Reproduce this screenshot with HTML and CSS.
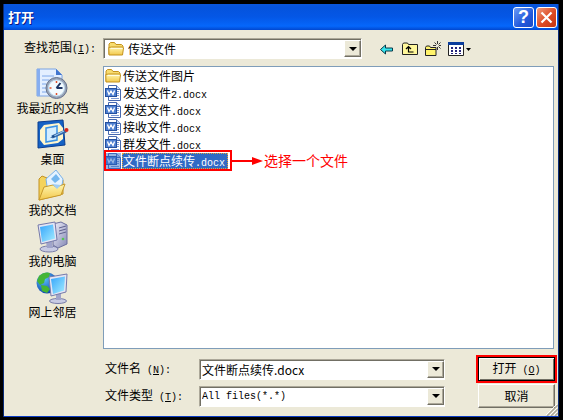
FILE: index.html
```html
<!doctype html>
<html lang="zh-CN">
<head>
  <meta charset="utf-8" />
  <meta name="viewport" content="width=device-width, initial-scale=1" />
  <title>打开</title>
  <link rel="stylesheet" href="styles.css">
</head>
<body>
  <!-- shared 16px icons -->
  <svg class="defs" width="0" height="0" aria-hidden="true">
    <defs>
      <linearGradient id="gold" x1="0" y1="0" x2="0" y2="1"><stop offset="0" stop-color="#fff6b0"/><stop offset="1" stop-color="#f2c84c"/></linearGradient>
      <linearGradient id="screen" x1="0" y1="0" x2="1" y2="1"><stop offset="0" stop-color="#35a5fb"/><stop offset="1" stop-color="#a5edff"/></linearGradient>
      <linearGradient id="case" x1="0" y1="0" x2="1" y2="1"><stop offset="0" stop-color="#f2f2fc"/><stop offset="1" stop-color="#8589b5"/></linearGradient>
      <radialGradient id="sea" cx=".35" cy=".3" r=".8"><stop offset="0" stop-color="#5cc4ff"/><stop offset="1" stop-color="#0739a4"/></radialGradient>
      <symbol id="folder" viewBox="0 0 16 16">
        <path d="M1 13.500V3l1.500-1.500h4L8 3.500h5.500L15 5v3" fill="#f7dc70" stroke="#c4921c"/>
        <path d="M1 14 .8 6.500 3.500 6h11l1 1-1 7z" fill="url(#gold)" stroke="#c4921c"/>
        <path d="M2.500 7.500h12" stroke="#fffce0"/>
      </symbol>
      <symbol id="word" viewBox="0 0 16 16">
        <path d="M3.500.5h8l4 4v11h-12z" fill="#fff" stroke="#486ab0"/>
        <path d="M11.500.5v4h4" fill="#c4d8f8" stroke="#486ab0"/>
        <path d="M12 6.500h2M12 8.500h2M12 10.500h2M6 13.500h8" stroke="#7e9bd5"/>
        <rect x=".5" y="3.500" width="11" height="8" fill="#4c7ed0" stroke="#24509e"/>
        <path d="M2.500 5.500 4 9.500 6 6 8 9.500 9.500 5.500" fill="none" stroke="#fff" stroke-width="1.300"/>
      </symbol>
    </defs>
  </svg>

  <main class="dialog" role="dialog" aria-labelledby="title">
    <header class="titlebar">
      <h1 id="title">打开</h1>
      <button class="caption help" type="button" aria-label="帮助">?</button>
      <button class="caption close" type="button" aria-label="关闭">
        <svg width="13" height="13" viewBox="0 0 13 13"><path d="M1.500 1.500l10 10M11.500 1.500l-10 10" stroke="#fff" stroke-width="2.200"/></svg>
      </button>
    </header>

    <form class="content">
      <label class="lookin-label" for="lookin">查找范围<span class="en">(<u>I</u>):</span></label>
      <div class="lookin">
        <div class="combo has-icon">
          <svg class="combo-icon" width="16" height="16"><use href="#folder"/></svg>
          <select id="lookin"><option>传送文件</option></select>
          <span class="drop"></span>
        </div>
        <div class="toolbar">
          <button type="button" aria-label="后退">
            <svg width="16" height="16" viewBox="0 0 16 16"><path d="M1.500 8.500l5-4.500v3h7v3h-7v3z" fill="#35e5ed" stroke="#083848"/></svg>
          </button>
          <button type="button" aria-label="向上一级">
            <svg width="16" height="16" viewBox="0 0 16 16"><path d="M.5 13.500v-10l1-1.500h4l1 1.500h9v10z" fill="#fff79a" stroke="#222"/><path d="M11.500 11H6.500V6.500M4 8l2.500-2.500L9 8" fill="none" stroke="#000" stroke-width="1.200"/></svg>
          </button>
          <button type="button" aria-label="新建文件夹">
            <svg width="16" height="16" viewBox="0 0 16 16"><path d="M.5 14.500v-8l1-1.500h3l1 1.500h5.500v8z" fill="#fff36a" stroke="#222"/><path d="M.5 8.500h10.500" stroke="#222"/><path d="M12.500 0v3M12.500 6v3M8 4.500h3M14 4.500h2M9.500 1.500l2 2M15.500 1.500l-2 2M13.500 5.500l2 2" stroke="#333"/></svg>
          </button>
          <button type="button" aria-label="查看" class="views">
            <svg width="24" height="16" viewBox="0 0 24 16"><path d="M.5 1.500h15v13H.5z" fill="#fff" stroke="#222"/><path d="M0 1h16v3H0z" fill="#0b3d9c"/><path d="M3 6h2v2H3zM7 6h2v2H7zM11 6h2v2h-2zM3 9h2v2H3zM7 9h2v2H7zM11 9h2v2h-2zM3 12h2v1H3zM7 12h2v1H7zM11 12h2v1h-2z" fill="#25257c"/><path d="M18 7h5l-2.500 3z" fill="#000"/></svg>
          </button>
        </div>
      </div>

      <nav class="places" aria-label="位置">
        <button type="button">
          <svg width="32" height="32" viewBox="0 0 32 32">
            <path d="M1 1h19l6 6v21H1z" fill="#e3efff" stroke="#7ba3e2"/><path d="M1 1h3v27H1z" fill="#86aef0"/><path d="M20 1v6h6" fill="#4276cf"/>
            <path d="M6 8h12M6 12h7M6 16h4M6 20h4M6 24h5" stroke="#7ea8ea"/>
            <circle cx="20.500" cy="20" r="10.500" fill="#98a3b8" stroke="#66748c"/><circle cx="20.500" cy="20" r="8" fill="#f3fbff" stroke="#bfdcef"/>
            <path d="M20.500 20l4-5M20.500 20h6" stroke="#1d3564" stroke-width="2"/><path d="M20.500 13v2M20.500 25v2M13.500 20h2" stroke="#e0512c" stroke-width="1.500"/>
          </svg>
          <span>我最近的文档</span>
        </button>
        <button type="button">
          <svg width="32" height="32" viewBox="0 0 32 32">
            <path d="M1 3 26 1l2 25-27 3z" fill="#1562c5" stroke="#0b3d8f"/><path d="M7 6l15-2 4 5v11l-5 4-14 2-4-5V11z" fill="#fff6cd"/>
            <path d="M9 9l11-2v14L9 23z" fill="#d5eeff" stroke="#3a93e6" stroke-width="1.500"/>
            <path d="M15 18l14-6" stroke="#3768a8" stroke-width="3"/><path d="M17 17l10-5" stroke="#a7d9ff"/><path d="M13 19l4-3 1 2z" fill="#164a8a"/><circle cx="29.500" cy="11" r="2" fill="#d8271c"/>
          </svg>
          <span>桌面</span>
        </button>
        <button type="button">
          <svg width="32" height="32" viewBox="0 0 32 32">
            <path d="M3 30V9l3-3 5 2 3 5 13-3v14z" fill="#f4d35c" stroke="#c29123"/>
            <path d="M10 9 20 0l7 9-2 13-13 1z" fill="#e5f3ff" stroke="#79b1e8"/><path d="M15 9l5-5 4 5-5 4z" fill="#74b7ef"/>
            <path d="M3 30 8 17l9-2 3 2 9-3-4 11z" fill="url(#gold)" stroke="#c89a2c"/><path d="M16 14l5 5 4-4" fill="#9fcdf5"/>
          </svg>
          <span>我的文档</span>
        </button>
        <button type="button">
          <svg width="32" height="32" viewBox="0 0 32 32">
            <path d="M17 3l8-2 6 3v19l-9 4-5-3z" fill="url(#case)" stroke="#6b6f9e"/><path d="M23 7l7-2M23 10l7-2M23 13l7-2" stroke="#5f638e"/><circle cx="27" cy="18" r="1.300" fill="#53c653"/>
            <ellipse cx="13" cy="28" rx="9" ry="3" fill="#c8cbe4" stroke="#787ca9"/><path d="M10 21h6l1 6h-6z" fill="#a0a4ca"/>
            <path d="M2 4l17-3 2 18-16 4z" fill="#e4e5f4" stroke="#757aaa"/><path d="M4 6l13-2.500 2 14L6 21z" fill="url(#screen)"/>
          </svg>
          <span>我的电脑</span>
        </button>
        <button type="button">
          <svg width="32" height="32" viewBox="0 0 32 32">
            <circle cx="11" cy="11" r="10.500" fill="url(#sea)"/><path d="M3 4c4-4 9-4 11-3l-1 4-4 2-1 4-4 2-3-4zM5 13l6 1 3 3-3 4-5-2z" fill="#45b535"/>
            <ellipse cx="22" cy="29" rx="8.500" ry="2.500" fill="#c8cbe4" stroke="#787ca9"/><path d="M20 22h5v6h-5z" fill="#a0a4ca"/>
            <path d="M13 5l18-3-1 18-15 4z" fill="#e4e5f4" stroke="#757aaa"/><path d="M15 7l14-2.500-1 14L17 22z" fill="url(#screen)"/>
          </svg>
          <span>网上邻居</span>
        </button>
      </nav>

      <div class="right">
        <ul class="files" role="listbox" aria-label="文件">
          <li role="option"><svg width="16" height="16"><use href="#folder"/></svg><span class="name">传送文件图片</span></li>
          <li role="option"><svg width="16" height="16"><use href="#word"/></svg><span class="name">发送文件<span class="en">2.docx</span></span></li>
          <li role="option"><svg width="16" height="16"><use href="#word"/></svg><span class="name">发送文件<span class="en">.docx</span></span></li>
          <li role="option"><svg width="16" height="16"><use href="#word"/></svg><span class="name">接收文件<span class="en">.docx</span></span></li>
          <li role="option"><svg width="16" height="16"><use href="#word"/></svg><span class="name">群发文件<span class="en">.docx</span></span></li>
          <li role="option" aria-selected="true" class="selected">
            <svg class="tinted" width="16" height="16"><use href="#word"/><rect width="16" height="16" fill="#316ac5" opacity=".5"/></svg><span class="name">文件断点续传<span class="en">.docx</span></span>
            <span class="callout">
              <svg width="33" height="10" viewBox="0 0 33 10"><path d="M0 5h24" stroke="#f00" stroke-width="2"/><path d="M21 1l11 4-11 4z" fill="#f00"/></svg>选择一个文件
            </span>
          </li>
        </ul>

        <div class="fields">
          <label for="filename">文件名<span class="en"> (<u>N</u>):</span></label>
          <div class="combo">
            <input id="filename" type="text" value="文件断点续传.docx">
            <span class="drop"></span>
          </div>
          <button class="btn default" type="button">打开<span class="en"> (<u>O</u>)</span></button>

          <label for="filetype">文件类型<span class="en"> (<u>T</u>):</span></label>
          <div class="combo">
            <select id="filetype" class="en"><option>All files(*.*)</option></select>
            <span class="drop"></span>
          </div>
          <button class="btn" type="button">取消</button>
        </div>
      </div>
    </form>
    <svg class="grip" width="12" height="12" viewBox="0 0 12 12"><path d="M1 12 12 1M5 12l7-7M9 12l3-3" stroke="#aca899" stroke-width="1.500"/><path d="M0 11 11 0M4 11l7-7M8 11l3-3" stroke="#fff"/></svg>
  </main>
</body>
</html>
```
FILE: styles.css
```css
:root{
  --face:#ece9d8;
  --dark:#716f64;
  --shadow:#aca899;
  --select:#316ac5;
  --mark:#f00;
}

*{box-sizing:border-box}
body{
  margin:0; padding:4px 5px 3px 4px; min-height:100vh; display:flex;
  background:#000; color:#000;
  font:12px/16px "Noto Sans CJK SC", sans-serif;
}
button,input,select{font:inherit; color:inherit; margin:0; padding:0; border:0; background:none; border-radius:0}
svg{display:block; flex:none}
.defs{position:absolute}
.en{font-family:"Liberation Mono", monospace; font-size:10px; white-space:pre}

.dialog{
  position:relative; flex:1; min-width:0; display:flex; flex-direction:column;
  background:var(--face); border-bottom:1px solid #0a3cc4;
  box-shadow:-1px 0 #0a2c78, 1px 0 #0a2c78;
}

.titlebar{
  display:flex; align-items:center; gap:2px; height:26px; padding:0 1px 0 4px;
  background:linear-gradient(180deg, #0a56dc 0, #0553dd 15%, #0457e6 50%, #0567fb 85%, #0147cf 100%);
}
.titlebar h1{flex:1; margin:0; font-size:13px; line-height:20px; font-weight:700; color:#fff; text-shadow:1px 1px #0a1883}
.caption{
  display:grid; place-items:center; width:21px; height:21px;
  border:1px solid #fff; border-radius:3px; color:#fff;
}
.help{background:linear-gradient(135deg, #6b9bf5, #2259dc 60%, #1b4ac5); font:700 18px/19px "Liberation Sans", sans-serif}
.close{background:linear-gradient(135deg, #f09a7c, #dd4a24 55%, #c23411)}

.content{
  flex:1; display:grid; grid-template:auto 1fr / 99px minmax(0, 1fr);
  row-gap:7px; padding:8px 4px 8px 0;
}
.lookin-label{align-self:center; padding-left:20px; white-space:nowrap}
.lookin{display:flex; align-items:center; gap:17px}
.lookin .combo{flex:0 1 259px}

.combo{
  display:flex; align-items:center; min-width:0; height:21px; background:#fff;
  border:1px solid; border-color:var(--shadow) #fff #fff var(--shadow);
  box-shadow:inset 1px 1px var(--dark);
}
.combo select,.combo input{flex:1; min-width:0; height:19px; padding:0 2px; appearance:none; outline:0}
.combo .en{padding:2px 2px 0}
.combo-icon{margin-left:4px}
.combo.has-icon select{padding-left:4px}
.drop{
  display:grid; place-items:center; width:17px; height:17px; background:var(--face);
  border:1px solid; border-color:#fff var(--dark) var(--dark) #fff;
  box-shadow:inset -1px -1px var(--shadow);
  pointer-events:none;
}
.drop::after{content:""; border:4px solid transparent; border-top-color:#000; border-bottom:0}

.toolbar{display:flex; gap:7px}
.toolbar button{display:block}

.places{display:flex; flex-direction:column; align-items:center; gap:3px; padding:2px 2px 0 0}
.places button{display:flex; flex-direction:column; align-items:center; height:48px; line-height:16px; white-space:nowrap}

.right{display:flex; flex-direction:column; gap:6px; min-width:0}
.files{flex:1; margin:0; padding:0 1px; list-style:none; background:#fff; border:1px solid #7f9db9}
.files li{display:flex; align-items:center; gap:1px; height:17px; white-space:nowrap}
.files .name{height:16px; padding:0 1px}
.files .selected{position:relative; width:fit-content; padding-right:3px}
.selected .name{background:var(--select); color:#fff; outline:1px dotted #e0a33a; outline-offset:-1px; padding-right:3px}
.selected::after{content:""; position:absolute; inset:-2px -1px; border:2px solid var(--mark)}
.callout{
  position:absolute; left:100%; top:0; display:flex; align-items:center;
  color:var(--mark); font-size:14px; line-height:17px;
}

/* the bottom row runs slightly past the list so the marked button fits */
.fields{
  display:grid; grid-template-columns:96px minmax(0, 1fr) 81px;
  align-items:center; row-gap:1px; margin-right:-3px;
}
.fields label{padding-left:2px; white-space:nowrap}
.fields .combo{margin-right:31px}
.btn{
  height:24px; margin:0 2px; background:var(--face);
  border:1px solid; border-color:#fff var(--dark) var(--dark) #fff;
  box-shadow:inset -1px -1px var(--shadow);
}
.btn.default{
  height:28px; margin:0; border:2px solid var(--mark);
  box-shadow:inset 0 0 0 1px #000, inset 2px 2px #fff, inset -2px -2px var(--dark);
}

.grip{position:absolute; right:0; bottom:0}
```
